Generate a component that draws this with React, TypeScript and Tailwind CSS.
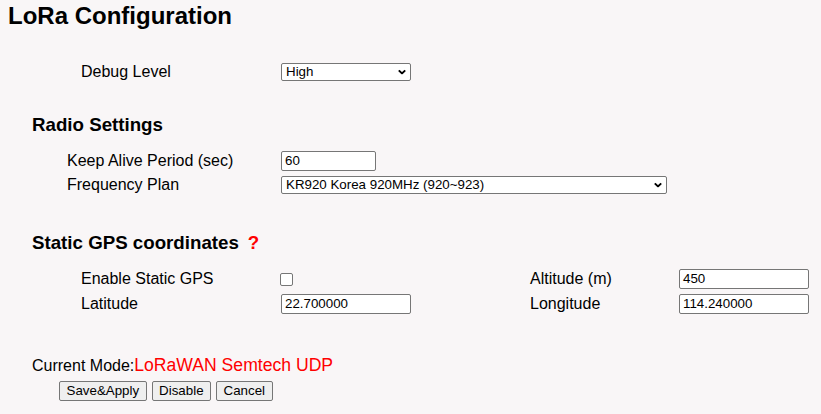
import React from "react";

const font = { fontFamily: '"Liberation Sans", Arial, sans-serif' };

function Chevron() {
  return (
    <svg
      className="pointer-events-none absolute right-[5px] top-1/2 -translate-y-1/2"
      width="8"
      height="5"
      viewBox="0 0 8 5"
    >
      <polyline points="0.8,0.8 4,4 7.2,0.8" fill="none" stroke="#000" strokeWidth="1.9" />
    </svg>
  );
}

function Select({ value, w }: { value: string; w: string }) {
  return (
    <div className={`relative h-[18px] ${w}`}>
      <div className="box-border h-[18px] w-full rounded-[2px] border border-[#767676] bg-white pl-[4px] text-[13.33px] leading-[16px] text-black">
        {value}
      </div>
      <Chevron />
    </div>
  );
}

function Input({ value, w }: { value: string; w: string }) {
  return (
    <div
      className={`box-border h-[20px] ${w} rounded-[2px] border border-[#767676] bg-white pl-[3px] text-[13.33px] leading-[18px] text-black`}
    >
      {value}
    </div>
  );
}

function Button({ label }: { label: string }) {
  return (
    <div className="box-border flex h-[20px] items-center rounded-[2px] border border-[#767676] bg-[#efefef] px-[6.5px] text-[13.33px] leading-[16px] text-black">
      {label}
    </div>
  );
}

export default function App() {
  return (
    <div className="min-h-[414px] w-[821px] bg-[#f9f6f7] text-black" style={font}>
      <div className="pt-[2px]">
        <h2 className="ml-[8px] text-[24px] font-bold leading-[28px]">LoRa Configuration</h2>

        <div className="mt-[32px] flex h-[20px] items-center text-[16px]">
          <div className="ml-[81px] w-[200px] leading-[18.4px]">Debug Level</div>
          <Select value="High" w="w-[130px]" />
        </div>

        <h3 className="ml-[32px] mt-[32px] text-[18.72px] font-bold leading-[22px]">Radio Settings</h3>

        <div className="mt-[15px] flex h-[20px] items-center text-[16px]">
          <div className="ml-[67px] w-[214px] leading-[18.4px]">Keep Alive Period (sec)</div>
          <Input value="60" w="w-[95px]" />
        </div>
        <div className="mt-[4px] flex h-[20px] items-center text-[16px]">
          <div className="ml-[67px] w-[214px] leading-[18.4px]">Frequency Plan</div>
          <Select value="KR920 Korea 920MHz (920~923)" w="w-[386px]" />
        </div>

        <h3 className="ml-[32px] mt-[37px] flex text-[18.72px] font-bold leading-[22px]">
          <span>Static GPS coordinates</span>
          <span className="ml-[9px] text-[#ff0000]">?</span>
        </h3>

        <div className="mt-[15px] flex h-[20px] items-center text-[16px]">
          <div className="ml-[81px] w-[199px] leading-[18.4px]">Enable Static GPS</div>
          <div className="w-[250px]">
            <div className="box-border h-[13px] w-[13px] rounded-[2px] border border-[#767676] bg-white" />
          </div>
          <div className="w-[149px] leading-[18.4px]">Altitude (m)</div>
          <Input value="450" w="w-[130px]" />
        </div>
        <div className="mt-[5px] flex h-[20px] items-center text-[16px]">
          <div className="ml-[81px] w-[200px] leading-[18.4px]">Latitude</div>
          <div className="w-[249px]">
            <Input value="22.700000" w="w-[130px]" />
          </div>
          <div className="w-[149px] leading-[18.4px]">Longitude</div>
          <Input value="114.240000" w="w-[130px]" />
        </div>

        <div className="ml-[32px] mt-[41px] text-[16px] leading-[20px]">
          Current Mode:<span className="text-[17.6px] text-[#ff0000]">LoRaWAN Semtech UDP</span>
        </div>

        <div className="ml-[59px] mt-[5px] flex gap-[5px]">
          <Button label="Save&Apply" />
          <Button label="Disable" />
          <Button label="Cancel" />
        </div>
      </div>
    </div>
  );
}
